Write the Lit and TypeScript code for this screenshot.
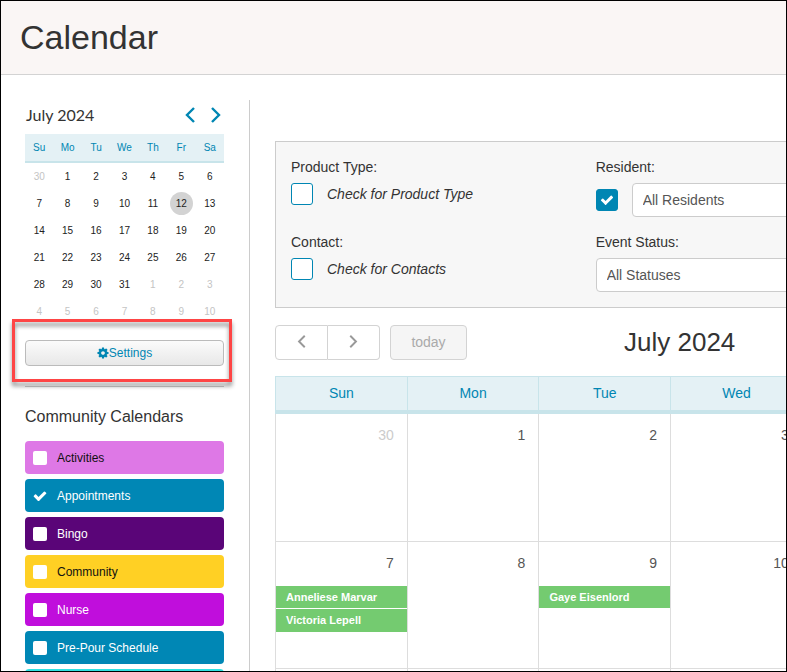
import { LitElement, html, css, svg, nothing } from "lit";
import { customElement, property } from "lit/decorators.js";
import { classMap } from "lit/directives/class-map.js";
import { styleMap } from "lit/directives/style-map.js";

const CHECK = svg`<path fill="currentColor" d="M1671 566q0 40-28 68l-724 724-136 136q-28 28-68 28t-68-28l-136-136-362-362q-28-28-28-68t28-68l136-136q28-28 68-28t68 28l294 295 656-657q28-28 68-28t68 28l136 136q28 28 28 68z"/>`;
const COG = svg`<path fill="currentColor" d="M1152 896q0-106-75-181t-181-75-181 75-75 181 75 181 181 75 181-75 75-181zm512-109v222q0 12-8 23t-20 13l-185 28q-19 54-39 91 35 50 107 138 10 12 10 25t-9 23q-27 37-99 108t-94 71q-12 0-26-9l-138-108q-44 23-91 38-16 136-29 186-7 28-36 28h-222q-14 0-24.5-8.5t-11.5-21.5l-28-184q-49-16-90-37l-141 107q-10 9-25 9-14 0-25-11-126-114-165-168-7-10-7-23 0-12 8-23 15-21 51-66.5t54-70.5q-27-50-41-99l-183-27q-13-2-21-12.5t-8-23.5v-222q0-12 8-23t19-13l186-28q14-46 39-92-40-57-107-138-10-12-10-24 0-10 9-23 26-36 98.5-107.5t94.5-71.5q13 0 26 10l138 107q44-23 91-38 16-136 29-186 7-28 36-28h222q14 0 24.5 8.5t11.5 21.5l28 184q49 16 90 37l142-107q9-9 24-9 13 0 25 10 129 119 165 170 7 8 7 22 0 12-8 23-15 21-51 66.5t-54 70.5q26 50 41 98l183 28q13 2 21 12.5t8 23.5z"/>`;

const chevron = (direction: "left" | "right", width: number, height: number) => html`
  <svg width=${width} height=${height} viewBox="0 0 10 16" aria-hidden="true">
    <path d=${direction === "left" ? "M9 1L2 8l7 7" : "M1 1l7 7-7 7"} fill="none" stroke="currentColor" stroke-width="2.4" />
  </svg>`;

const shared = css`
  * { box-sizing: border-box; }
  button, select, input { font: inherit; margin: 0; }
  button { cursor: pointer; padding: 0; }
  svg { display: block; }
  h1, h2, h3, p, ul { margin: 0; padding: 0; font-weight: 400; }
  table { border-spacing: 0; table-layout: fixed; width: 100%; }
  th, td { padding: 0; font-weight: 400; }
`;

@customElement("mini-calendar")
class MiniCalendar extends LitElement {
  static styles = [shared, css`
    :host { display: block; }
    .head { display: flex; align-items: center; justify-content: space-between; height: 34px; padding: 0 2px 5px 1px; }
    .title { font: 16px/24px Lato, sans-serif; color: #333; }
    .nav { display: flex; gap: 14px; }
    .nav button { border: 0; background: none; color: #0086b3; padding: 0 1px; }
    .week th { height: 29px; background: #e4f1f5; border-bottom: 2px solid #c8e4ea; color: #0086b3; font-size: 10px; }
    .days td { height: 27px; text-align: center; }
    .day { display: block; margin: 0 auto; width: 23px; height: 23px; border: 0; border-radius: 50%; background: none; font-size: 10px; color: #222; }
    .other { color: #c4c4c4; }
    .today { background: #d3d3d3; }
  `];

  render() {
    const days = Array.from({ length: 42 }, (_, i) => ({
      n: i === 0 ? 30 : i > 31 ? i - 31 : i,
      other: i === 0 || i > 31,
    }));
    const weeks = [0, 1, 2, 3, 4, 5].map((w) => days.slice(w * 7, w * 7 + 7));
    return html`
      <div class="head">
        <h2 class="title">July 2024</h2>
        <div class="nav">
          <button>${chevron("left", 10, 16)}</button>
          <button>${chevron("right", 10, 16)}</button>
        </div>
      </div>
      <table>
        <thead class="week"><tr>${["Su", "Mo", "Tu", "We", "Th", "Fr", "Sa"].map((d) => html`<th>${d}</th>`)}</tr></thead>
        <tbody class="days">
          ${weeks.map((week) => html`<tr>${week.map((d) => html`
            <td><button class=${classMap({ day: true, other: d.other, today: d.n === 12 })}>${d.n}</button></td>`)}</tr>`)}
        </tbody>
      </table>`;
  }
}

@customElement("month-view")
class MonthView extends LitElement {
  static styles = [shared, css`
    :host { display: block; }
    .toolbar { display: flex; align-items: center; height: 35px; margin-bottom: 16px; }
    .group { display: flex; }
    .btn { height: 35px; padding-bottom: 2px; border: 1px solid #d3d3d3; background: #fff; color: #999; display: flex; align-items: center; justify-content: center; font-size: 14px; }
    .prev { width: 53px; border-radius: 4px 0 0 4px; }
    .next { width: 52px; border-left: 0; border-radius: 0 4px 4px 0; }
    .today { width: 77px; margin-left: 10px; border-radius: 4px; background: #f5f5f5; color: #aaa; }
    .title { margin-left: 157px; font-size: 26px; line-height: 35px; color: #333; }
    th { height: 38px; padding-bottom: 2px; background: #e4f1f5; border: 1px solid #c8e4ea; border-width: 1px 0 4px 1px; color: #0086b3; font-size: 14px; }
    th:last-child { border-right-width: 1px; }
    td { height: 127px; vertical-align: top; border: 1px solid #ddd; border-width: 1px 0 0 1px; }
    td:last-child { border-right-width: 1px; }
    .first td { border-top-width: 0; }
    .num { height: 44px; padding-right: 13px; text-align: right; font-size: 14px; line-height: 43px; color: #555; }
    .other { color: #ccc; }
    .event { display: block; height: 22px; margin-bottom: 1px; padding-left: 10px; background: #74cb70; color: #fff; font-size: 11px; font-weight: 700; line-height: 22px; text-decoration: none; white-space: nowrap; }
    .event:last-child:not(:nth-child(2)) { height: 23px; }
  `];

  private events: Record<number, string[]> = {
    7: ["Anneliese Marvar", "Victoria Lepell"],
    9: ["Gaye Eisenlord"],
  };

  render() {
    return html`
      <div class="toolbar">
        <div class="group">
          <button class="btn prev">${chevron("left", 9, 13)}</button>
          <button class="btn next">${chevron("right", 9, 13)}</button>
        </div>
        <button class="btn today">today</button>
        <h2 class="title">July 2024</h2>
      </div>
      <table>
        <thead><tr>${["Sun", "Mon", "Tue", "Wed", "Thu", "Fri", "Sat"].map((d) => html`<th>${d}</th>`)}</tr></thead>
        <tbody>
          ${[0, 1, 2, 3, 4].map((w) => html`
            <tr class=${w === 0 ? "first" : ""}>
              ${[0, 1, 2, 3, 4, 5, 6].map((d) => {
                const i = w * 7 + d;
                const other = i === 0 || i > 31;
                const n = i === 0 ? 30 : i > 31 ? i - 31 : i;
                return html`<td>
                  <div class=${classMap({ num: true, other })}>${n}</div>
                  ${other ? nothing : (this.events[n] ?? []).map((e) => html`<a class="event" href="#">${e}</a>`)}
                </td>`;
              })}
            </tr>`)}
        </tbody>
      </table>`;
  }
}

interface Category { name: string; color: string; dark?: boolean; checked?: boolean }

@customElement("category-row")
class CategoryRow extends LitElement {
  @property({ attribute: false }) item!: Category;

  static styles = [shared, css`
    :host { display: block; }
    .row { display: flex; align-items: center; gap: 10px; height: 33px; padding-left: 8px; border-radius: 4px; color: #fff; font-size: 12px; }
    .dark { color: #111; }
    .box { display: grid; width: 14px; height: 14px; }
    .box > * { grid-area: 1 / 1; }
    input { appearance: none; width: 14px; height: 14px; border-radius: 2px; background: #fff; }
    input:checked { background: none; }
    .tick { display: none; pointer-events: none; }
    input:checked + .tick { display: block; }
  `];

  render() {
    const { name, color, dark, checked } = this.item;
    return html`
      <label class=${classMap({ row: true, dark: !!dark })} style=${styleMap({ background: color })}>
        ${name ? html`
          <span class="box">
            <input type="checkbox" ?checked=${checked}>
            <svg class="tick" width="14" height="14" viewBox="40 40 1712 1712">${CHECK}</svg>
          </span>
          <span>${name}</span>` : nothing}
      </label>`;
  }
}

@customElement("app-root")
class AppRoot extends LitElement {
  static styles = [shared, css`
    :host { display: flex; flex-direction: column; box-sizing: border-box; height: 100vh; overflow: hidden; border: 1px solid #000; background: #fff; color: #333; font: 14px/20px "Liberation Sans", Arial, sans-serif; }
    .banner { flex: none; padding: 16px 19px 17px; background: #faf6f5; border-bottom: 1px solid #d3d3d3; }
    .banner h1 { font-size: 34px; line-height: 40px; }
    .body { flex: 1; min-height: 0; display: flex; padding: 25px 0 0 24px; }
    .side { flex: none; width: 225px; padding-right: 25px; border-right: 1px solid #ccc; }
    .settings { position: relative; padding: 15px 0 20px; border-bottom: 1px solid #ccc; }
    .settings::after { content: ""; position: absolute; inset: -6px -8px 4px -13px; border: 3px solid #fe4545; filter: drop-shadow(0 4px 2px rgba(0, 0, 0, 0.45)); pointer-events: none; }
    .settings button { display: flex; align-items: center; justify-content: center; width: 100%; height: 26px; border: 1px solid #bbb; border-radius: 4px; background: linear-gradient(#fbfbfb, #e8e8e8); color: #0086b3; font-size: 12px; }
    .side h3 { padding: 20px 0 14px; font-size: 16px; line-height: 20px; }
    .list { display: flex; flex-direction: column; gap: 5px; list-style: none; }
    .main { flex: 1; min-width: 0; overflow: hidden; padding: 41px 0 0 25px; }
    .wide { min-width: 922px; }
    .filters { display: grid; grid-template-columns: repeat(3, 1fr); gap: 15px 24px; margin-bottom: 17px; padding: 15px; border: 1px solid #ccc; background: #f7f7f7; }
    .field { grid-column: span 1; }
    .last { grid-column: span 2; }
    .control { display: flex; align-items: center; gap: 14px; height: 34px; margin-top: 6px; }
    .top { align-items: flex-start; }
    .box { display: grid; place-items: center; width: 22px; height: 22px; }
    .box > * { grid-area: 1 / 1; }
    .box input { appearance: none; width: 22px; height: 22px; border: 1px solid #0086b3; border-radius: 3px; background: #fff; }
    .box input:checked { background: #0086b3; }
    .tick { display: none; color: #fff; pointer-events: none; }
    input:checked + .tick { display: block; }
    em { line-height: 22px; }
    select { appearance: none; flex: none; width: 244px; height: 34px; padding: 0 10px; border: 1px solid #ccc; border-radius: 4px; background: #fff; color: #555; }
    .full { width: 280px; }
  `];

  private categories: Category[] = [
    { name: "Activities", color: "#de78e6", dark: true },
    { name: "Appointments", color: "#0087b5", checked: true },
    { name: "Bingo", color: "#5a0578" },
    { name: "Community", color: "#ffd024", dark: true },
    { name: "Nurse", color: "#c00edc" },
    { name: "Pre-Pour Schedule", color: "#0087b5" },
    { name: "", color: "#30e0e0" },
  ];

  private box(id: string, checked = false) {
    return html`<span class="box">
      <input type="checkbox" id=${id} ?checked=${checked}>
      <svg class="tick" width="14" height="14" viewBox="0 0 1792 1792">${CHECK}</svg>
    </span>`;
  }

  render() {
    return html`
      <header class="banner"><h1>Calendar</h1></header>
      <div class="body">
        <aside class="side">
          <mini-calendar></mini-calendar>
          <div class="settings">
            <button><svg width="12" height="12" viewBox="64 64 1664 1664">${COG}</svg>Settings</button>
          </div>
          <h3>Community Calendars</h3>
          <ul class="list">
            ${this.categories.map((c) => html`<li><category-row .item=${c}></category-row></li>`)}
          </ul>
        </aside>
        <main class="main">
          <div class="wide">
            <form class="filters">
              <div class="field">
                <label for="product">Product Type:</label>
                <div class="control top">${this.box("product")}<em>Check for Product Type</em></div>
              </div>
              <div class="last">
                <label for="resident" id="resident-label">Resident:</label>
                <div class="control">${this.box("resident", true)}
                  <select aria-labelledby="resident-label"><option>All Residents</option></select>
                </div>
              </div>
              <div class="field">
                <label for="contact">Contact:</label>
                <div class="control top">${this.box("contact")}<em>Check for Contacts</em></div>
              </div>
              <div class="last">
                <label for="status">Event Status:</label>
                <div class="control"><select id="status" class="full"><option>All Statuses</option></select></div>
              </div>
            </form>
            <month-view></month-view>
          </div>
        </main>
      </div>`;
  }
}
